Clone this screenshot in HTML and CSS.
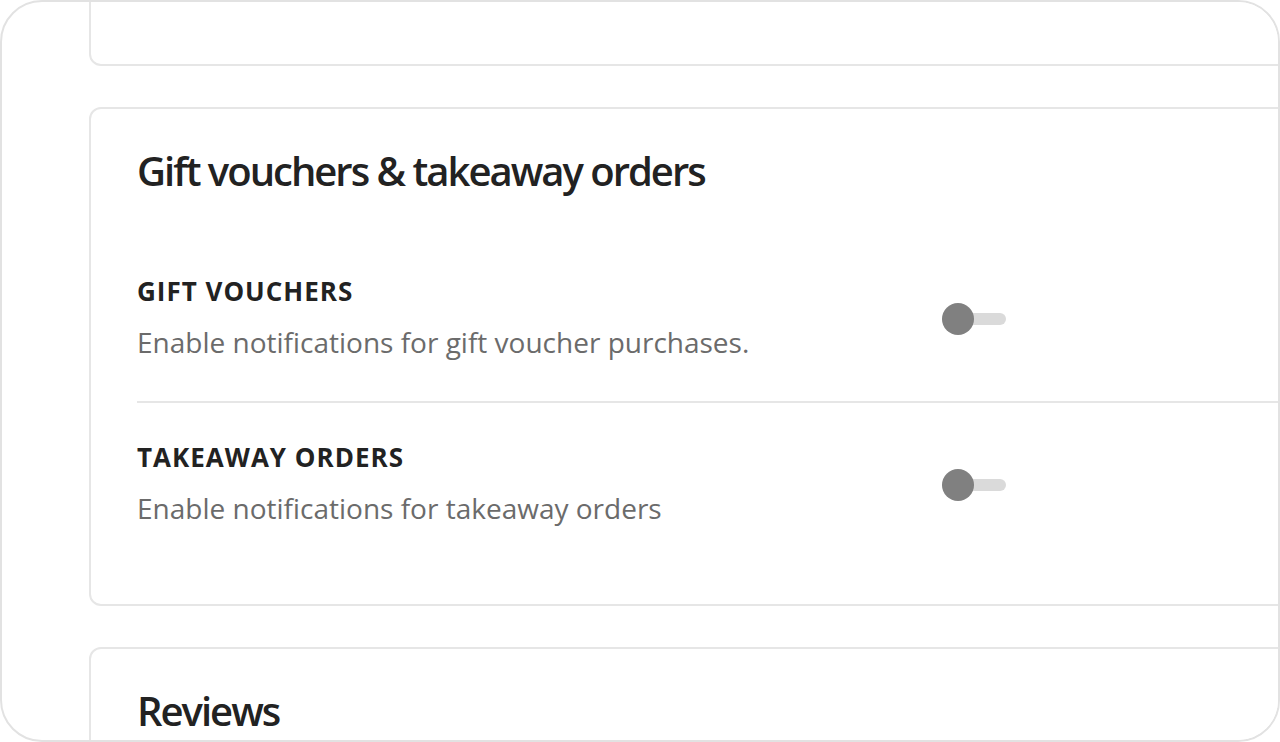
FILE: index.html
```html
<!DOCTYPE html>
<html lang="en">
<head>
<meta charset="utf-8">
<title>Notifications</title>
<link rel="stylesheet" href="styles.css">
</head>
<body>
<div class="frame">
  <div class="column">
    <section class="card card-top"></section>

    <section class="card">
      <h2 class="card-title">Gift vouchers &amp; takeaway orders</h2>
      <div class="setting-list">
        <div class="setting">
          <div class="setting-text">
            <div class="setting-label">Gift vouchers</div>
            <div class="setting-desc">Enable notifications for gift voucher purchases.</div>
          </div>
          <span class="toggle" role="switch" aria-checked="false"></span>
        </div>
        <div class="setting">
          <div class="setting-text">
            <div class="setting-label">Takeaway orders</div>
            <div class="setting-desc">Enable notifications for takeaway orders</div>
          </div>
          <span class="toggle" role="switch" aria-checked="false"></span>
        </div>
      </div>
    </section>

    <section class="card">
      <h2 class="card-title">Reviews</h2>
    </section>
  </div>
</div>
</body>
</html>
```

FILE: styles.css
```css
html, body {
  margin: 0;
  padding: 0;
  background: #ffffff;
}

body {
  font-family: "Open Sans", "Noto Sans", "Liberation Sans", sans-serif;
  color: #222222;
}

.frame {
  width: 1280px;
  height: 742px;
  box-sizing: border-box;
  border: 2px solid #e2e2e2;
  border-radius: 42px;
  overflow: hidden;
  background: #ffffff;
}

.column {
  margin-top: -36px;
  padding-left: 87px;
  display: flex;
  flex-direction: column;
  gap: 41px;
}

.card {
  width: 1260px;
  box-sizing: border-box;
  border: 2px solid #e6e6e6;
  border-radius: 12px;
  padding: 38px 0 77px 46px;
  background: #ffffff;
}

.card-top {
  height: 100px;
  padding: 0;
}

.card-title {
  margin: 0 0 43px 0;
  font-size: 40px;
  line-height: 48px;
  font-weight: 600;
  letter-spacing: -2px;
  color: #222222;
}

.setting-list {
  display: flex;
  flex-direction: column;
}

.setting {
  display: flex;
  align-items: center;
  padding: 39px 0 40px 0;
}

.setting:first-child {
  padding-top: 38px;
  border-bottom: 2px solid #e6e6e6;
}

.setting:last-child {
  padding-bottom: 0;
}

.setting-text {
  flex: 0 0 805px;
}

.setting-label {
  font-size: 26px;
  line-height: 30px;
  font-weight: 700;
  letter-spacing: 1px;
  text-transform: uppercase;
  color: #222222;
}

.setting-desc {
  margin-top: 17px;
  font-size: 28px;
  line-height: 38px;
  color: #6b6b6b;
}

.toggle {
  position: relative;
  width: 64px;
  height: 32px;
  flex: 0 0 64px;
}

.toggle::before {
  content: "";
  position: absolute;
  left: 0;
  right: 0;
  top: 10px;
  height: 12px;
  border-radius: 6px;
  background: #dadada;
}

.toggle::after {
  content: "";
  position: absolute;
  left: 0;
  top: 0;
  width: 32px;
  height: 32px;
  border-radius: 50%;
  background: #808080;
}
```
